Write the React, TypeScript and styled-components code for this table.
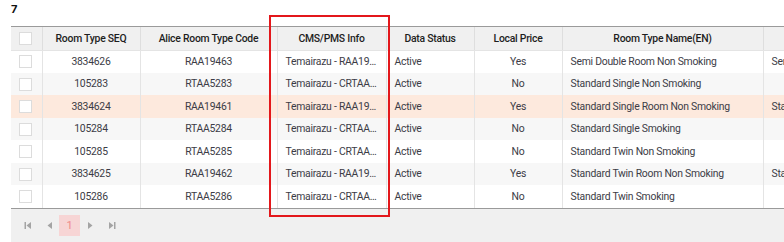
import styled, { createGlobalStyle } from "styled-components";

const GlobalStyle = createGlobalStyle`
  body {
    margin: 0;
    background: #ffffff;
    font-family: Roboto, "Noto Sans", sans-serif;
  }
`;

const Page = styled.div`
  position: relative;
  width: 784px;
  height: 242px;
  overflow: hidden;
  padding-left: 11px;
  box-sizing: border-box;
`;

const Count = styled.div`
  height: 26px;
  padding-top: 3px;
  box-sizing: border-box;
  font-family: Inter, sans-serif;
  font-size: 11px;
  font-weight: 700;
  color: #111;
  line-height: 12px;
`;

const TableWrap = styled.div`
  width: 773px;
  overflow: hidden;
  border-top: 1px solid #9a9a9a;
  border-bottom: 1px solid #9a9a9a;
`;

const Table = styled.table`
  border-collapse: collapse;
  table-layout: fixed;
  width: 900px;
  font-size: 10.4px;
  letter-spacing: -0.25px;
`;

const HeadCell = styled.th<{ $w: number }>`
  width: ${(p) => p.$w}px;
  height: 23px;
  padding: 0 8px;
  box-sizing: border-box;
  background: #f0f0f0;
  border-right: 1px solid #dedede;
  border-bottom: 1px solid #e4e4e4;
  font-size: 10.4px;
  font-weight: 500;
  letter-spacing: -0.25px;
  color: #1e1e1e;
  text-align: center;
  white-space: nowrap;
  overflow: hidden;
`;

const Row = styled.tr<{ $tone: "white" | "gray" | "hot" }>`
  height: 22.5px;
  background: ${(p) =>
    p.$tone === "hot" ? "#fde9dd" : p.$tone === "gray" ? "#f7f7f7" : "#ffffff"};
`;

const Cell = styled.td<{ $align?: "left" | "center" }>`
  padding: 0 8px;
  border-right: 1px solid #e4e4e4;
  color: #3c3c46;
  text-align: ${(p) => p.$align ?? "left"};
  white-space: nowrap;
  overflow: hidden;
  text-overflow: ellipsis;
`;

const CheckCell = styled.td`
  padding: 0;
  border-right: 1px solid #e4e4e4;
  text-align: center;
`;

const Box = styled.span`
  display: inline-block;
  width: 13px;
  height: 13px;
  margin-left: -1px;
  vertical-align: middle;
  background: #fff;
  border: 1px solid #dcdcdc;
  box-sizing: border-box;
`;

const Pager = styled.div`
  display: flex;
  align-items: center;
  height: 33px;
  padding: 0 0 0 6px;
  background: #f0f0f0;
`;

const PageBtn = styled.div<{ $active?: boolean }>`
  width: 21px;
  height: 21px;
  display: flex;
  align-items: center;
  justify-content: center;
  background: ${(p) => (p.$active ? "#f7d5d5" : "transparent")};
  color: #f08a8a;
  font-size: 11px;
`;

const Highlight = styled.div`
  position: absolute;
  left: 269px;
  top: 15px;
  width: 121px;
  height: 202px;
  border: 2px solid #e3171b;
  box-sizing: border-box;
  pointer-events: none;
`;

const columns = [
  { label: "", w: 31 },
  { label: "Room Type SEQ", w: 98 },
  { label: "Alice Room Type Code", w: 137 },
  { label: "CMS/PMS Info", w: 109 },
  { label: "Data Status", w: 88 },
  { label: "Local Price", w: 88 },
  { label: "Room Type Name(EN)", w: 201 },
  { label: "Room Type Name", w: 148 },
];

const rows = [
  { seq: "3834626", code: "RAA19463", cms: "Temairazu - RAA19463 (Semi Double)", price: "Yes", name: "Semi Double Room Non Smoking", extra: "Semi Double Room" },
  { seq: "105283", code: "RTAA5283", cms: "Temairazu - CRTAA205283", price: "No", name: "Standard Single Non Smoking", extra: "" },
  { seq: "3834624", code: "RAA19461", cms: "Temairazu - RAA19461 (Standard Single)", price: "Yes", name: "Standard Single Room Non Smoking", extra: "Standard Single" },
  { seq: "105284", code: "RTAA5284", cms: "Temairazu - CRTAA205284", price: "No", name: "Standard Single Smoking", extra: "" },
  { seq: "105285", code: "RTAA5285", cms: "Temairazu - CRTAA205285", price: "No", name: "Standard Twin Non Smoking", extra: "" },
  { seq: "3834625", code: "RAA19462", cms: "Temairazu - RAA19462 (Standard Twin)", price: "Yes", name: "Standard Twin Room Non Smoking", extra: "Standard Twin" },
  { seq: "105286", code: "RTAA5286", cms: "Temairazu - CRTAA205286", price: "No", name: "Standard Twin Smoking", extra: "" },
];

const Arrow = ({ dir, bar }: { dir: "left" | "right"; bar?: boolean }) => (
  <svg width="8" height="7" viewBox="0 0 8 7">
    {dir === "left" ? (
      <>
        {bar && <rect x="0.5" y="0" width="1.5" height="7" fill="#a4a4a4" />}
        <polygon points="7,0 7,7 2.5,3.5" fill="#a4a4a4" />
      </>
    ) : (
      <>
        <polygon points="1,0 1,7 5.5,3.5" fill="#a4a4a4" />
        {bar && <rect x="6" y="0" width="1.5" height="7" fill="#a4a4a4" />}
      </>
    )}
  </svg>
);

export default function App() {
  return (
    <>
      <GlobalStyle />
      <Page>
        <Count>7</Count>
        <TableWrap>
          <Table>
            <thead>
              <tr>
                {columns.map((c, i) => (
                  <HeadCell key={i} $w={c.w}>
                    {i === 0 ? <Box /> : c.label}
                  </HeadCell>
                ))}
              </tr>
            </thead>
            <tbody>
              {rows.map((r, i) => (
                <Row key={r.seq} $tone={i === 2 ? "hot" : i % 2 ? "gray" : "white"}>
                  <CheckCell>
                    <Box />
                  </CheckCell>
                  <Cell $align="center">{r.seq}</Cell>
                  <Cell $align="center">{r.code}</Cell>
                  <Cell>{r.cms}</Cell>
                  <Cell>Active</Cell>
                  <Cell $align="center">{r.price}</Cell>
                  <Cell>{r.name}</Cell>
                  <Cell>{r.extra}</Cell>
                </Row>
              ))}
            </tbody>
          </Table>
        </TableWrap>
        <Pager>
          <PageBtn>
            <Arrow dir="left" bar />
          </PageBtn>
          <PageBtn>
            <Arrow dir="left" />
          </PageBtn>
          <PageBtn $active>1</PageBtn>
          <PageBtn>
            <Arrow dir="right" />
          </PageBtn>
          <PageBtn>
            <Arrow dir="right" bar />
          </PageBtn>
        </Pager>
        <Highlight />
      </Page>
    </>
  );
}
